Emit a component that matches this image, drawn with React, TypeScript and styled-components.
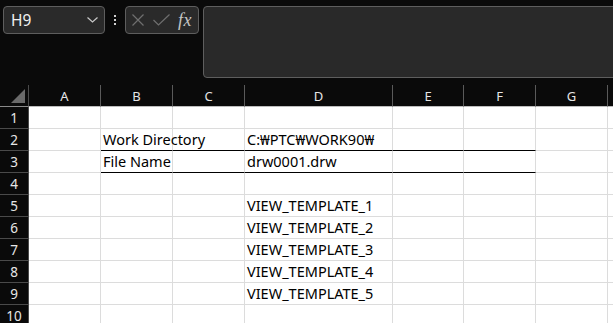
import styled, { createGlobalStyle } from "styled-components";

const GlobalStyle = createGlobalStyle`
  html, body {
    margin: 0;
    padding: 0;
    background: #ffffff;
    overflow: hidden;
  }
  body {
    font-family: "Noto Sans", "Noto Sans CJK KR", sans-serif;
  }
`;

const columns = [
  { name: "A", width: 72 },
  { name: "B", width: 72 },
  { name: "C", width: 72 },
  { name: "D", width: 148 },
  { name: "E", width: 71 },
  { name: "F", width: 72 },
  { name: "G", width: 72 },
  { name: "", width: 40 },
];

const cells: Record<string, string> = {
  B2: "Work Directory",
  D2: "C:₩PTC₩WORK90₩",
  B3: "File Name",
  D3: "drw0001.drw",
  D5: "VIEW_TEMPLATE_1",
  D6: "VIEW_TEMPLATE_2",
  D7: "VIEW_TEMPLATE_3",
  D8: "VIEW_TEMPLATE_4",
  D9: "VIEW_TEMPLATE_5",
};

// rows 2 and 3 get a black bottom border from B to F
const ruled = (row: number, col: string) =>
  (row === 2 || row === 3) && col !== "" && "BCDEF".includes(col);

const template = `29px ${columns.map((c) => `${c.width}px`).join(" ")}`;

export default () => {
  const rows = Array.from({ length: 10 }, (_, i) => i + 1);

  return (
    <Page>
      <GlobalStyle />
      <Toolbar>
        <NameBox>
          <span>H9</span>
          <svg width="11" height="6" viewBox="0 0 11 6">
            <polyline points="0.5,0.5 5.5,5 10.5,0.5" fill="none" stroke="#c8c8c8" strokeWidth="1.2" />
          </svg>
        </NameBox>
        <Dots>
          <i />
          <i />
          <i />
        </Dots>
        <FxBox>
          <svg width="12" height="12" viewBox="0 0 12 12">
            <path d="M0.5 0.5 L11.5 11.5 M11.5 0.5 L0.5 11.5" stroke="#6f6f6f" strokeWidth="1.2" />
          </svg>
          <svg width="17" height="12" viewBox="0 0 17 12">
            <polyline points="0.5,6 5.5,11 16.5,0.5" fill="none" stroke="#6f6f6f" strokeWidth="1.2" />
          </svg>
          <Fx>fx</Fx>
        </FxBox>
        <FormulaBar />
      </Toolbar>

      <Sheet style={{ gridTemplateColumns: template }}>
        <Corner>
          <svg width="14" height="14" viewBox="0 0 14 14">
            <polygon points="14,0 14,14 0,14" fill="#6a6a6a" />
          </svg>
        </Corner>
        {columns.map((c, i) => (
          <ColHead key={i} $last={i === columns.length - 1}>
            {c.name}
          </ColHead>
        ))}
        {rows.map((r) => (
          <>
            <RowHead key={`h${r}`}>{r}</RowHead>
            {columns.map((c, i) => (
              <Cell key={`${r}-${i}`} $ruled={ruled(r, c.name)}>
                {cells[`${c.name}${r}`]}
              </Cell>
            ))}
          </>
        ))}
      </Sheet>
    </Page>
  );
};

const Page = styled.div`
  width: 613px;
  height: 323px;
  overflow: hidden;
  background: #ffffff;
`;

const Toolbar = styled.div`
  height: 85px;
  background: #0a0a0a;
  display: flex;
  align-items: flex-start;
  padding: 6px 0 0 3px;
  box-sizing: border-box;
  margin-right: -20px;
`;

const Box = styled.div`
  height: 28px;
  box-sizing: border-box;
  border: 1px solid #5e5e5e;
  border-radius: 4px;
  background: #2a2a2a;
`;

const NameBox = styled(Box)`
  width: 102px;
  display: flex;
  align-items: center;
  justify-content: space-between;
  padding: 0 6px 0 7px;
  color: #f0f0f0;
  font-size: 15.5px;
  font-family: "Noto Sans", sans-serif;
`;

const Dots = styled.div`
  width: 20px;
  height: 28px;
  display: flex;
  flex-direction: column;
  align-items: center;
  justify-content: center;
  gap: 2px;

  i {
    width: 2px;
    height: 2px;
    background: #d0d0d0;
  }
`;

const FxBox = styled(Box)`
  width: 74px;
  display: flex;
  align-items: center;
  gap: 9px;
  padding-left: 6px;
`;

const Fx = styled.span`
  font-family: "Liberation Serif", "DejaVu Serif", serif;
  font-style: italic;
  font-size: 18px;
  letter-spacing: 0.5px;
  color: #c4c4c4;
  margin-left: -1px;
`;

const FormulaBar = styled(Box)`
  flex: 1;
  height: 72px;
  margin-left: 4px;
  background: #292929;
`;

const Sheet = styled.div`
  display: grid;
  grid-auto-rows: 22px;
`;

const Corner = styled.div`
  background: #0a0a0a;
  border-right: 1px solid #4a4a4a;
  border-bottom: 1px solid #8a8a8a;
  display: flex;
  align-items: flex-end;
  justify-content: flex-end;
  padding: 0 3px 3px 0;
`;

const ColHead = styled.div<{ $last?: boolean }>`
  background: #0a0a0a;
  color: #e6e6e6;
  font-size: 13px;
  font-family: "Noto Sans", sans-serif;
  display: flex;
  align-items: center;
  justify-content: center;
  border-right: 1px solid ${(p) => (p.$last ? "transparent" : "#5a5a5a")};
  border-bottom: 1px solid #bdbdbd;
  box-sizing: border-box;
`;

const RowHead = styled.div`
  background: #0a0a0a;
  color: #e6e6e6;
  font-size: 13.5px;
  font-family: "Noto Sans", sans-serif;
  display: flex;
  align-items: center;
  justify-content: center;
  border-right: 1px solid #4a4a4a;
  border-bottom: 1px solid #4a4a4a;
  box-sizing: border-box;
`;

const Cell = styled.div<{ $ruled?: boolean }>`
  box-sizing: border-box;
  border-right: 1px solid #dcdcdc;
  border-bottom: 1px solid ${(p) => (p.$ruled ? "#000000" : "#dcdcdc")};
  color: #000000;
  font-size: 14.5px;
  line-height: 20px;
  padding: 0 0 1px 2px;
  white-space: nowrap;
  display: flex;
  align-items: center;
`;
